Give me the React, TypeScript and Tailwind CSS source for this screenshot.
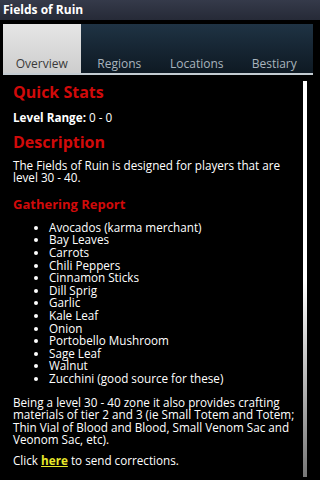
import React from "react";

const tabs = ["Overview", "Regions", "Locations", "Bestiary"];

const items = [
  "Avocados (karma merchant)",
  "Bay Leaves",
  "Carrots",
  "Chili Peppers",
  "Cinnamon Sticks",
  "Dill Sprig",
  "Garlic",
  "Kale Leaf",
  "Onion",
  "Portobello Mushroom",
  "Sage Leaf",
  "Walnut",
  "Zucchini (good source for these)",
];

export default function App() {
  return (
    <div
      className="w-[320px] h-[480px] bg-black overflow-hidden relative"
      style={{ fontFamily: '"Open Sans", "Noto Sans", sans-serif' }}
    >
      <div className="h-[20px] bg-gradient-to-b from-[#353a4a] to-[#262a37] flex items-center px-[3px]">
        <span className="text-white font-bold text-[12px] leading-none">Fields of Ruin</span>
      </div>

      <div className="mt-[4px] mx-[3px] w-[310px]">
        <div className="flex h-[49px]">
          {tabs.map((t, i) => (
            <div
              key={t}
              className={
                i === 0
                  ? "flex-1 flex items-end justify-center pb-[1px] bg-gradient-to-b from-[#e6e6e6] to-[#cdcdcd] text-[#3a3a3a]"
                  : "flex-1 flex items-end justify-center pb-[1px] bg-gradient-to-b from-[#1f3344] to-[#0e1923] text-[#a9b4bd]"
              }
            >
              <span className="text-[12px] leading-[16px]">{t}</span>
            </div>
          ))}
        </div>
        <div className="h-[2px] bg-[#c3cbd1]" />
      </div>

      <div className="pl-[13px] pr-[20px] pt-[7px] text-white text-[11.7px] leading-[12.6px]">
        <h2 className="text-[#d10a0a] font-bold text-[16px] leading-[20px]">Quick Stats</h2>
        <p className="mt-[9px]">
          <span className="font-bold">Level Range:</span> 0 - 0
        </p>
        <h2 className="text-[#d10a0a] font-bold text-[16px] leading-[20px] mt-[8px]">Description</h2>
        <p className="mt-[7px]">
          The Fields of Ruin is designed for players that are level 30 - 40.
        </p>
        <h3 className="text-[#d10a0a] font-bold text-[13px] leading-[16px] mt-[12px]">Gathering Report</h3>
        <ul className="mt-[9px] pl-[36px] list-disc">
          {items.map((it) => (
            <li key={it}>{it}</li>
          ))}
        </ul>
        <p className="mt-[11px]">
          Being a level 30 - 40 zone it also provides crafting materials of tier 2 and 3 (ie Small Totem and Totem;
          Thin Vial of Blood and Blood, Small Venom Sac and Veonom Sac, etc).
        </p>
        <p className="mt-[8px]">
          Click <a className="text-[#e8e82a] font-bold underline">here</a> to send corrections.
        </p>
      </div>

      <div className="absolute left-[303px] top-[81px] w-[4px] h-[396px] bg-gradient-to-b from-white via-white to-[#777]" />
    </div>
  );
}
